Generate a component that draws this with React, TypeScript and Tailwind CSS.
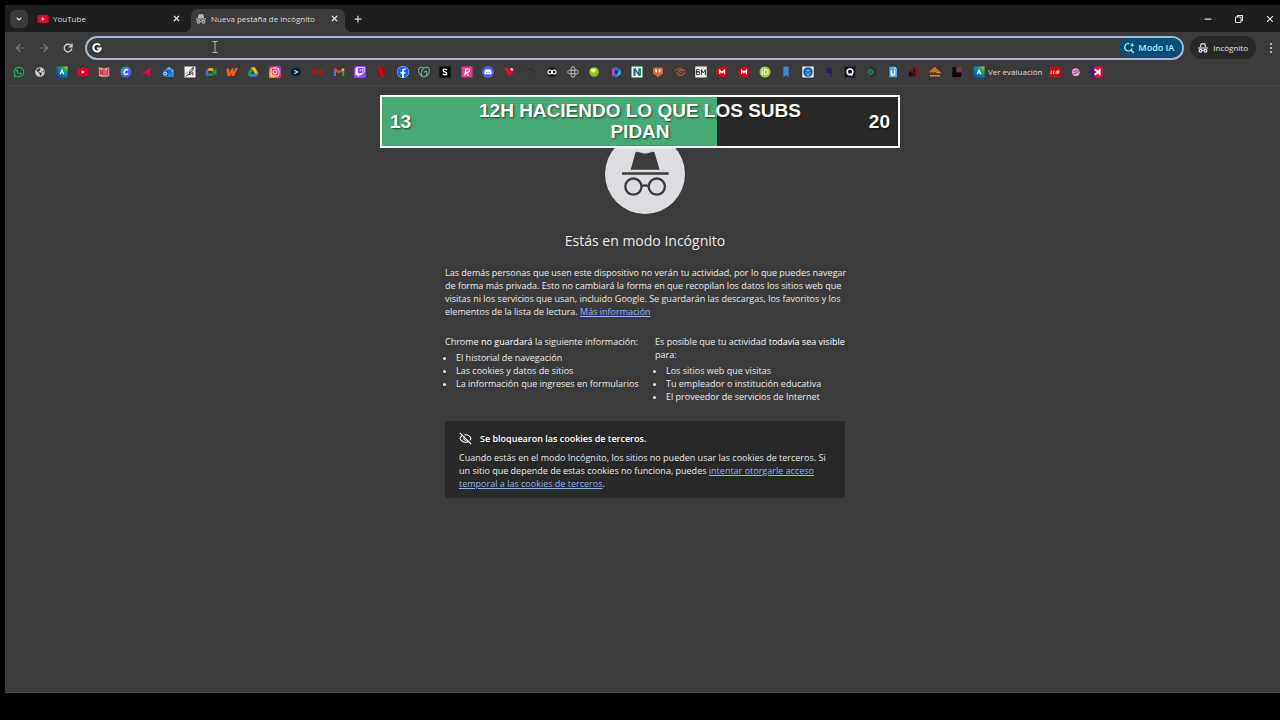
import type { ReactNode } from "react";
import {
  FaDiscord,
  FaFacebook,
  FaGlobeAmericas,
  FaInstagram,
  FaTwitch,
  FaWhatsapp,
} from "react-icons/fa";
import { SiGodaddy } from "react-icons/si";
import { ArrowLeft, ArrowRight, ChevronDown, EyeOff, Minus, Plus, X } from "lucide-react";

type BoxProps = { children: ReactNode };

const Box = ({ children }: BoxProps) => (
  <svg viewBox="0 0 12 12" className="size-3" aria-hidden="true">
    {children}
  </svg>
);

const YouTubeIcon = () => (
  <Box>
    <rect x="0.3" y="2" width="11.4" height="8" rx="2" fill="#e4002b" />
    <path d="M4.8 4.3 7.8 6 4.8 7.7z" fill="#fff" />
  </Box>
);

const AlexandriaIcon = () => (
  <Box>
    <defs>
      <linearGradient id="alx" x1="0" y1="1" x2="1" y2="0">
        <stop offset="0" stopColor="#0b3fa8" />
        <stop offset="0.5" stopColor="#0a83b4" />
        <stop offset="0.75" stopColor="#1fae5a" />
        <stop offset="1" stopColor="#f2e22c" />
      </linearGradient>
    </defs>
    <rect x="0.5" y="0.5" width="11" height="11" fill="url(#alx)" />
    <path d="M4.2 8.2 6 4.2 7.8 8.2" fill="none" stroke="#fff" strokeWidth="1.3" />
  </Box>
);

const MegaIcon = () => (
  <Box>
    <circle cx="6" cy="6" r="5.6" fill="#d9001b" />
    <path d="M3.6 8V4.3L6 6.6l2.4-2.3V8" fill="none" stroke="#fff" strokeWidth="1.4" />
  </Box>
);

const IncognitoIcon = ({ filled = false }: { filled?: boolean }) => (
  <svg viewBox="0 0 12 12" className="size-3 shrink-0" fill="none" stroke="currentColor" aria-hidden="true">
    <path d="M3.4 5 4.2 1.8h3.6L8.6 5" strokeWidth="1.2" fill={filled ? "currentColor" : "none"} />
    <path d="M1 6h10" strokeWidth="1.2" />
    <circle cx="3.5" cy="8.8" r="1.4" strokeWidth="1.2" />
    <circle cx="8.5" cy="8.8" r="1.4" strokeWidth="1.2" />
    <path d="M4.8 8.4Q6 7.9 7.2 8.4" strokeWidth="1" />
  </svg>
);

const bookmarks: { name: string; icon: ReactNode }[] = [
  { name: "WhatsApp", icon: <FaWhatsapp className="size-3 text-[#25c35f]" /> },
  { name: "Web", icon: <FaGlobeAmericas className="size-2.5 text-[#c9c9c9]" /> },
  { name: "Plataforma", icon: <AlexandriaIcon /> },
  { name: "YouTube", icon: <YouTubeIcon /> },
  {
    name: "Lecturas",
    icon: (
      <Box>
        <path d="M0.8 1.2 5.6 2.2 6 3 6.6 2.2 11.2 1.2V10L6 11.2 0.8 10z" fill="#e8a3a8" />
        <path d="M2.2 9V3.4L4.4 9V3.4M6 2.6v8.4M8 4v5M9.8 2v6.6Q8 10 7.8 8" fill="none" stroke="#bd2637" strokeWidth="1" />
      </Box>
    ),
  },
  {
    name: "Canva",
    icon: (
      <Box>
        <defs>
          <linearGradient id="canva" x1="0" y1="0" x2="1" y2="1">
            <stop offset="0" stopColor="#12b9d0" />
            <stop offset="1" stopColor="#7a35e2" />
          </linearGradient>
        </defs>
        <circle cx="6" cy="6" r="5.6" fill="url(#canva)" />
        <path d="M8 4.2C7.5 2.7 4 3.6 4 6.6 4 9.2 6.8 9 8 7.4" fill="none" stroke="#fff" strokeWidth="1.3" />
      </Box>
    ),
  },
  { name: "Triángulo", icon: <Box><path d="M9.4 1.6v9H7.6L6.8 8.6 1 7.4z" fill="#d80b46" /></Box> },
  {
    name: "Outlook",
    icon: (
      <Box>
        <path d="M2.2 4.4 7 0.8l4.6 3.4v6.6H2.2z" fill="#5fb5f2" />
        <path d="M4 3.4h5.6v4L6.8 9 4 7.4z" fill="#1c6fca" />
        <path d="M11.6 5v6H3z" fill="#2288e0" />
        <rect x="0.2" y="4.6" width="6" height="6" rx="0.8" fill="#0b5cb5" />
        <circle cx="3.2" cy="7.6" r="1.5" fill="none" stroke="#fff" />
      </Box>
    ),
  },
  {
    name: "Notas",
    icon: (
      <Box>
        <rect x="0.5" y="0.5" width="11" height="11" fill="#f3f3f3" />
        <path d="M1.6 10.4Q7 8 9.4 3 10.4 0.6 8 2.2 5.4 4.2 5.2 8.4 6.4 9 7.8 7.4 10 5 8.6 9.4" fill="none" stroke="#222" strokeWidth="0.9" />
        <path d="M1.4 7.4 4 6.2" stroke="#cf7d8a" strokeWidth="0.8" />
      </Box>
    ),
  },
  {
    name: "Meet",
    icon: (
      <Box>
        <path d="M0.6 5 3.2 2.2V5z" fill="#e04336" />
        <path d="M3.2 2.2h5.2v2.6H3.2z" fill="#f5b50a" />
        <path d="M0.6 5h2.6v4.8H1.4q-0.8 0-0.8-0.8z" fill="#2477ee" />
        <path d="M3.2 7.4h5.2v2.4H3.2zM6.8 6 11.4 2.6v6.8z" fill="#18a24b" />
      </Box>
    ),
  },
  {
    name: "Wattpad",
    icon: <Box><path d="M0.4 2.8 3 2.2l0.6 4.4L6 2.2h1.6L7.8 6.2 9.8 1.6 11.8 2 8.4 9.8 5.8 10 5.4 7.4 4 10.2 1.4 10z" fill="#f26419" /></Box>,
  },
  {
    name: "Drive",
    icon: (
      <Box>
        <path d="M4.2 1.2 0.4 7.8l1.8 3L6 4.2z" fill="#12a15a" />
        <path d="M4.2 1.2h3.6l3.8 6.6H8z" fill="#fbbc15" />
        <path d="M4 7.8h7.6l-1.8 3H2.2z" fill="#3c7df0" />
      </Box>
    ),
  },
  {
    name: "Instagram",
    icon: (
      <span className="flex size-3 items-center justify-center rounded-[2px] bg-linear-to-tr from-[#fdb52c] via-[#f02a5c] to-[#a82bd8]">
        <FaInstagram className="size-2.5 text-white" />
      </span>
    ),
  },
  {
    name: "Consola",
    icon: (
      <Box>
        <circle cx="6" cy="6" r="4.8" fill="#0b2038" />
        <path d="M4.2 4.2 7.6 6 4.2 7.8" fill="none" stroke="#b9dbef" strokeWidth="1.1" />
      </Box>
    ),
  },
  {
    name: "Noticias",
    icon: <Box><path d="M0.4 8V4.4L2.2 6.6 4 4.4V8M5 4.8h2.4M5 6.2h2M5 7.6h2.6M5.4 4.4V8M8.6 7.6V4.8h2.8v2.8H8.6" fill="none" stroke="#b80f1b" strokeWidth="1.4" /></Box>,
  },
  {
    name: "Gmail",
    icon: (
      <Box>
        <path d="M0.8 3v7h2.2V5.2z" fill="#3f80ee" />
        <path d="M11.2 3v7H9V5.2z" fill="#25a353" />
        <path d="M0.8 3.2Q1.2 1.6 3 2.6L6 5l3-2.4v3L6 7.8 0.8 4.2z" fill="#e6402f" />
        <path d="M9 2.6q1.8-1 2.2 0.6v1L9 5.8z" fill="#f9bb19" />
      </Box>
    ),
  },
  {
    name: "Twitch",
    icon: (
      <span className="flex size-3 items-center justify-center rounded-[2px] bg-[#9146ff]">
        <FaTwitch className="size-2.5 text-white" />
      </span>
    ),
  },
  {
    name: "Netflix",
    icon: (
      <Box>
        <path d="M2.6 0.8h2.6v10.4H2.6zM6.8 0.8h2.6v10.4H6.8z" fill="#9f0711" />
        <path d="M2.6 0.8h2.6L9.4 11.2H6.8z" fill="#c90a16" />
      </Box>
    ),
  },
  { name: "Facebook", icon: <FaFacebook className="size-3 rounded-full bg-white text-[#0866ff]" /> },
  { name: "GoDaddy", icon: <SiGodaddy className="size-3 text-[#67b89b]" /> },
  {
    name: "Scribd",
    icon: (
      <Box>
        <rect x="0.5" y="0.5" width="11" height="11" fill="#000" />
        <path d="M8.2 3.8Q4.2 2.2 4.2 4.3 4.2 5.6 6 6 8 6.4 7.8 7.8 6.8 9.4 3.8 8.2" fill="none" stroke="#fff" strokeWidth="1.4" />
      </Box>
    ),
  },
  {
    name: "Roster",
    icon: (
      <Box>
        <rect x="0.5" y="0.5" width="11" height="11" fill="#e83f93" />
        <path d="M3.8 9.6 4.8 3H7q2 0 1.4 2Q8 6.4 5 6.4L7.6 9.6" fill="none" stroke="#fff" strokeWidth="1.2" />
      </Box>
    ),
  },
  {
    name: "Discord",
    icon: (
      <span className="flex size-3 items-center justify-center rounded-full bg-[#5560e8]">
        <FaDiscord className="size-2 text-white" />
      </span>
    ),
  },
  {
    name: "Ofertas",
    icon: (
      <Box>
        <path d="M0.6 3 4 1.4 6.4 3.4 9 3.6 10.4 6.2 6.4 10.6z" fill="#d6152c" />
        <path d="M7 2.6 9.2 2 10.6 4.6 8 4.6z" fill="#f5dede" />
      </Box>
    ),
  },
  { name: "Archivo", icon: <Box><path d="M1.6 4.2Q6 1.8 8 4.4L10 7" fill="none" stroke="#2c2c2c" strokeWidth="1.3" /></Box> },
  {
    name: "Infinito",
    icon: (
      <Box>
        <circle cx="6" cy="6" r="5.2" fill="#222" />
        <circle cx="3.8" cy="6" r="1.9" fill="none" stroke="#eee" strokeWidth="1.2" />
        <circle cx="8.2" cy="6" r="1.9" fill="none" stroke="#eee" strokeWidth="1.2" />
      </Box>
    ),
  },
  {
    name: "Trébol",
    icon: (
      <Box>
        <g fill="none" stroke="#bdbdbd" strokeWidth="1">
          <rect x="4.2" y="0.8" width="3.6" height="10.4" rx="1.8" />
          <rect x="0.8" y="4.2" width="10.4" height="3.6" rx="1.8" />
        </g>
      </Box>
    ),
  },
  {
    name: "Esfera",
    icon: (
      <Box>
        <circle cx="6" cy="6" r="4.8" fill="#9acb20" />
        <path d="M3.4 3.2 6.6 2.4 8 4.8 5.6 6.4 3.4 5.4z" fill="#f2fbe0" />
        <path d="M2 8Q6 11 10 7" fill="none" stroke="#6f9c18" strokeWidth="0.8" />
      </Box>
    ),
  },
  {
    name: "Clipchamp",
    icon: (
      <Box>
        <path d="M2 2.2 6 0.6l5 3.6-0.4 4.4L6 11.4 2 10z" fill="#3e62cf" />
        <path d="M2 2.2v7.8L5.4 8V3.8z" fill="#9462c8" />
        <path d="M6 11.4 11 8V4.6L8 6z" fill="#43a4d6" />
        <circle cx="6.2" cy="6" r="1.7" fill="#262e55" />
      </Box>
    ),
  },
  {
    name: "Norma",
    icon: (
      <Box>
        <rect x="0.5" y="0.5" width="11" height="11" fill="#f2f8f7" />
        <path d="M2.4 9.8V2.2h2L7.4 7V2.2h2.2v7.6h-2L4.6 5v4.8z" fill="#13687f" />
        <path d="M8.6 2.2h1.4v7.6H8.6z" fill="#20a06c" />
      </Box>
    ),
  },
  {
    name: "Citas",
    icon: (
      <Box>
        <path d="M2.2 1.4h7.6Q11 1.4 11 3v4Q11 8.4 9.6 8.6L6 11.2 2.6 8.6Q1 8.4 1 7V3Q1 1.4 2.2 1.4z" fill="#d4673b" />
        <path d="M3.2 3.6h2v2L4 7V5.4h-0.8zM6.6 3.6h2v2L7.4 7V5.4h-0.8z" fill="#fff" />
      </Box>
    ),
  },
  {
    name: "Ojo",
    icon: <Box><path d="M0.8 4.6Q6 0.2 11 4.8 6.6 3.4 4.6 5 6 7.4 8 5.8M11.2 6.4Q6 12.8 2.4 6.2" fill="none" stroke="#b4552e" strokeWidth="1.1" /></Box>,
  },
  {
    name: "BM",
    icon: (
      <Box>
        <rect x="0.3" y="0.5" width="11.4" height="11" fill="#f4f4f2" />
        <path d="M1.6 3.4v5.2h1.6q1.6 0 1.6-1.4T3.2 5.8H1.6h1.2q1.6 0 1.6-1.2T2.8 3.4zM6.4 9V3.6L8.4 7l2-3.4V9" fill="none" stroke="#25343b" strokeWidth="1" />
      </Box>
    ),
  },
  { name: "MEGA", icon: <MegaIcon /> },
  { name: "MEGA archivos", icon: <MegaIcon /> },
  {
    name: "iD",
    icon: (
      <Box>
        <circle cx="6" cy="6" r="5.5" fill="#a9d03b" />
        <path d="M3.6 4.8v4M3.6 2.8v1M5.6 3.4v5h1.2q2.2-0.2 2.2-2.5T6.8 3.4z" fill="none" stroke="#fff" strokeWidth="1" />
      </Box>
    ),
  },
  { name: "Marcador", icon: <Box><path d="M3.4 0.8h5.2v10.4L6 9.2 3.4 11.2z" fill="#4b83e2" /></Box> },
  {
    name: "Instituto",
    icon: (
      <Box>
        <rect x="0.3" y="0.5" width="11.4" height="11" fill="#eef3f8" />
        <circle cx="6" cy="6" r="4.8" fill="#155aa5" />
        <path d="M6 2.6v6.8M3.6 4.4h4.8M3.2 6.2Q4 9 6 9.2 8 9 8.8 6.2" fill="none" stroke="#a6c8e8" strokeWidth="0.8" />
      </Box>
    ),
  },
  { name: "Párrafo", icon: <Box><path d="M8.6 2v8.4H7.4V7H4.4Q2.6 6 2.8 4 3 2 5 2z" fill="#2b1a63" /></Box> },
  {
    name: "Q",
    icon: (
      <Box>
        <rect x="0.5" y="0.5" width="11" height="11" fill="#1e1428" />
        <circle cx="6" cy="5.8" r="2.9" fill="none" stroke="#fff" strokeWidth="1.5" />
        <path d="M6.4 7.4 8.4 9.6" stroke="#fff" strokeWidth="1.3" />
      </Box>
    ),
  },
  {
    name: "Diapasón",
    icon: (
      <Box>
        <circle cx="4.6" cy="6" r="2" fill="none" stroke="#18855c" strokeWidth="1.3" />
        <path d="M4.4 1.8Q9.4 1.2 9.4 6T4.4 10.2" fill="none" stroke="#1c2a26" strokeWidth="1.5" />
      </Box>
    ),
  },
  {
    name: "Documento U",
    icon: (
      <Box>
        <path d="M2.4 0.8h5.2L10 3v8.2H2.4z" fill="#56aee8" />
        <path d="M7.6 0.8 10 3H7.6z" fill="#d8effc" />
        <path d="M4.4 4.6v3q0 1.6 1.6 1.6T7.6 7.6v-3" fill="none" stroke="#fff" strokeWidth="1.2" />
      </Box>
    ),
  },
  {
    name: "Bloques",
    icon: (
      <Box>
        <path d="M0.8 5.6h4v4.8h-4zM5.6 1.4h1.6v9H5.6z" fill="#230d10" />
        <path d="M2 2h3v3H2zM7.4 1.4h3v9h-3z" fill="#84121f" />
      </Box>
    ),
  },
  {
    name: "Techo",
    icon: <Box><path d="M0.8 6.6 5.8 2 10.8 6.6H8.2L5.8 4.4 3.6 6.6M1 9.8h10" fill="none" stroke="#ee8720" strokeWidth="1.4" /></Box>,
  },
  {
    name: "Letra L",
    icon: (
      <Box>
        <path d="M1.2 1.2h4v5.2h5v4.6h-9z" fill="#0d0a0b" />
        <path d="M6 1.4h4.8L10 5.6H6z" fill="#a32a3b" />
      </Box>
    ),
  },
];

const rowLink = "flex size-3 shrink-0 items-center justify-center";

const BookmarksBar = () => (
  <nav aria-label="Favoritos" className="flex h-[26px] items-center border-b border-[#484848] pb-px pl-2 text-[8px] text-[#dcdcdc]">
    <div className="flex w-[950px] items-center justify-between">
      {bookmarks.map((b) => (
        <a key={b.name} href="#" aria-label={b.name} className={rowLink}>
          {b.icon}
        </a>
      ))}
    </div>
    <a href="#" className="ml-[10px] flex items-center gap-[3px] whitespace-nowrap">
      <AlexandriaIcon />
      Ver evaluación
    </a>
    <div className="ml-[7px] flex items-center gap-[9px]">
      <a href="#" aria-label="Lego" className={rowLink}>
        <Box>
          <rect x="0.4" y="0.8" width="11.2" height="10.4" fill="#c90d17" />
          <path d="M2.4 4.6 1.8 7.4h1.4M5 4.6 4.4 7.4h1.2M7.6 4.6 6.8 7.4h1M10 4.6 9.4 7.4h-1L9 4.6z" fill="none" stroke="#fbe3d0" strokeWidth="0.8" />
        </Box>
      </a>
      <a href="#" aria-label="Planeta" className={rowLink}>
        <Box>
          <circle cx="5.8" cy="6.2" r="3.9" fill="#e0a0ce" />
          <path d="M1.4 8.6Q7.4 7.6 10.8 3.2M3.2 5.4Q6 5.6 7.8 3.6" fill="none" stroke="#7b3b77" strokeWidth="0.9" />
        </Box>
      </a>
      <a href="#" aria-label="K" className={rowLink}>
        <Box>
          <rect x="0.5" y="0.5" width="11" height="11" fill="#dd1455" />
          <path d="M0.5 0.5h2.8v11H0.5z" fill="#42127c" />
          <path d="M8.6 2.8v6.4M3.4 3.2 7.6 6 3.4 8.8" fill="none" stroke="#fff" strokeWidth="1.8" />
        </Box>
      </a>
    </div>
  </nav>
);

const TabStrip = () => (
  <div className="flex h-[27px] items-center bg-[#1f1f1f] pl-[5px] text-[8px] text-[#dedede]">
    <button aria-label="Buscar pestañas" className="flex size-[18px] items-center justify-center rounded-[6px] bg-[#3b3b3b]">
      <ChevronDown className="size-2" strokeWidth={3.5} />
    </button>
    <div className="ml-[3px] flex w-[154px] items-center gap-1 pr-1 pl-1.5">
      <YouTubeIcon />
      <button className="flex-1 text-left">YouTube</button>
      <button aria-label="Cerrar YouTube">
        <X className="size-[9px]" strokeWidth={3.5} />
      </button>
    </div>
    <div className="relative ml-1.5 flex h-[23px] w-[154px] items-center gap-1 self-end rounded-t-[7px] bg-[#3b3b3b] pr-1.5 pb-1 pl-1">
      <span className="absolute bottom-0 -left-1.5 size-1.5 bg-[radial-gradient(circle_at_0_0,transparent_6px,#3b3b3b_6px)]" />
      <span className="absolute -right-1.5 bottom-0 size-1.5 bg-[radial-gradient(circle_at_100%_0,transparent_6px,#3b3b3b_6px)]" />
      <span className="text-[#b5b5b5]">
        <IncognitoIcon filled />
      </span>
      <button className="flex-1 text-left whitespace-nowrap">Nueva pestaña de incógnito</button>
      <button aria-label="Cerrar pestaña">
        <X className="size-[9px]" strokeWidth={3.5} />
      </button>
    </div>
    <button aria-label="Nueva pestaña" className="ml-2">
      <Plus className="size-2.5" strokeWidth={3} />
    </button>
    <div className="ml-auto flex items-center gap-[21px] pr-[5px]">
      <button aria-label="Minimizar">
        <Minus className="size-2.5" strokeWidth={3} />
      </button>
      <button aria-label="Restaurar">
        <svg viewBox="0 0 10 10" className="size-2.5" fill="none" stroke="currentColor" strokeWidth="1.1">
          <rect x="1.5" y="3" width="5.5" height="5.5" rx="0.8" />
          <path d="M3.5 3V1.5h5v5H7" />
        </svg>
      </button>
      <button aria-label="Cerrar">
        <X className="size-2.5" strokeWidth={2.6} />
      </button>
    </div>
  </div>
);

const Toolbar = () => (
  <div className="flex h-[28px] items-center pt-[3px] pr-[3px] text-[8px] text-[#e3e3e3]">
    <div className="ml-[9px] flex items-center gap-3 text-[#7d7d7d]">
      <button aria-label="Atrás">
        <ArrowLeft className="size-3" strokeWidth={2.4} />
      </button>
      <button aria-label="Adelante">
        <ArrowRight className="size-3" strokeWidth={2.4} />
      </button>
      <button aria-label="Volver a cargar" className="text-[#d5d5d5]">
        <svg viewBox="0 0 12 12" className="size-3" fill="none" stroke="currentColor" strokeWidth="1.3">
          <path d="M9.8 6.6A3.8 3.8 0 1 1 8.8 3.4L9.8 4.4" />
          <path d="M10 1.6v3.2H6.8" />
        </svg>
      </button>
    </div>
    <div className="relative ml-[11px] flex h-6 flex-1 items-center rounded-full border-2 border-[#a3b8dc] pl-1">
      <svg viewBox="0 0 12 12" className="size-3" fill="none" stroke="#fff" strokeWidth="1.9" aria-hidden="true">
        <path d="M9 3.2A3.8 3.8 0 1 0 9.8 6.5H6.2" />
      </svg>
      <input aria-label="Buscar en Google o ingresar una URL" className="ml-2 h-4 flex-1 bg-transparent outline-none" />
      <svg viewBox="0 0 8 14" className="absolute top-0.5 left-[124px] h-3.5 w-2" fill="none" stroke="#b9b9b9" aria-hidden="true">
        <path d="M1.5 1.5h5M1.5 12.5h5M4 1.5v11" />
      </svg>
      <button className="flex h-[19px] items-center gap-[3px] rounded-full bg-[#064f78] pr-2 pl-1 text-[9px] font-semibold text-[#c3e8fc]">
        <svg viewBox="0 0 12 12" className="size-3" fill="none" stroke="currentColor" strokeWidth="1.2" aria-hidden="true">
          <path d="M6.2 1.6A3.7 3.7 0 1 0 9 6.4M7.8 8 11 11" />
          <path d="M9.2 0.6 9.9 2.4 11.7 3.1 9.9 3.8 9.2 5.6 8.5 3.8 6.7 3.1 8.5 2.4z" fill="currentColor" stroke="none" />
        </svg>
        Modo IA
      </button>
    </div>
    <button className="ml-1.5 flex h-[23px] items-center gap-1 rounded-full bg-[#282828] pr-2 pl-[7px]">
      <IncognitoIcon />
      Incógnito
    </button>
    <button aria-label="Menú" className="ml-[9px]">
      <svg viewBox="0 0 12 12" className="size-3" fill="currentColor">
        <circle cx="6" cy="2" r="1" />
        <circle cx="6" cy="6" r="1" />
        <circle cx="6" cy="10" r="1" />
      </svg>
    </button>
  </div>
);

const GoalBar = () => {
  const current = 13;
  const goal = 20;
  return (
    <div className="absolute top-[95px] left-1/2 w-[520px] -translate-x-1/2 border-2 border-white bg-[#292929] font-['Liberation_Sans',Arial,sans-serif] text-[19px] leading-[21px] font-bold text-white">
      <div className="absolute inset-y-0 left-0 bg-[#47aa74]" style={{ width: `${(current / goal) * 100}%` }} />
      <div className="relative flex items-center justify-between px-2 pt-[3px] pb-1 [text-shadow:1px_1px_2px_#0009]">
        <span>{current}</span>
        <p className="w-[340px] text-center">12H HACIENDO LO QUE LOS SUBS PIDAN</p>
        <span>{goal}</span>
      </div>
    </div>
  );
};

const IncognitoPage = () => (
  <main className="flex flex-1 flex-col items-center border-b border-[#505050] pt-12 pl-[5px] text-[9px] leading-[13px] text-[#e8e8e8]">
    <svg viewBox="0 0 80 80" className="size-20" aria-hidden="true">
      <circle cx="40" cy="40" r="40" fill="#dcdde1" />
      <path d="M30.5 20.4Q31 19.6 32.4 19.8L37.6 21.2Q40 21.8 42.4 21.2L47.6 19.8Q49 19.6 49.5 20.4L54.6 37.7H25.7z" fill="#3b3b3b" transform="translate(0 -2)" />
      <path d="M17 38.2h46.6v2.6H17z" fill="#3b3b3b" />
      <g fill="none" stroke="#3b3b3b" strokeWidth="2.3">
        <circle cx="28.4" cy="52.6" r="8.1" />
        <circle cx="51.8" cy="52.6" r="8.1" />
        <path d="M36.2 52.4Q40 50.4 44 52.4" />
      </g>
    </svg>
    <h1 className="mt-4 text-sm leading-[22px]">Estás en modo Incógnito</h1>
    <div className="w-full max-w-[400px]">
      <p className="mt-[14px] whitespace-nowrap">
        Las demás personas que usen este dispositivo no verán tu actividad, por lo que puedes navegar
        <br />
        de forma más privada. Esto no cambiará la forma en que recopilan los datos los sitios web que
        <br />
        visitas ni los servicios que usan, incluido Google. Se guardarán las descargas, los favoritos y los
        <br />
        elementos de la lista de lectura.{" "}
        <a href="#" className="text-[#8ab4f8] underline">
          Más información
        </a>
      </p>
      <div className="mt-[17px] grid grid-cols-2 gap-5">
        <div className="whitespace-nowrap">
          <p>
            Chrome <strong className="font-medium text-white">no guardará</strong> la siguiente información:
          </p>
          <ul className="mt-[3px] list-disc pl-[11px]">
            <li>El historial de navegación</li>
            <li>Las cookies y datos de sitios</li>
            <li>La información que ingreses en formularios</li>
          </ul>
        </div>
        <div>
          <p>
            Es posible que tu actividad <strong className="font-medium text-white">todavía sea visible</strong> para:
          </p>
          <ul className="mt-[3px] list-disc pl-[11px]">
            <li>Los sitios web que visitas</li>
            <li>Tu empleador o institución educativa</li>
            <li>El proveedor de servicios de Internet</li>
          </ul>
        </div>
      </div>
      <section className="mt-[18px] rounded-[2px] bg-[#282828] px-[14px] pt-[11px] pb-2">
        <h2 className="flex items-center gap-2 font-semibold text-white">
          <EyeOff className="size-[13px]" />
          Se bloquearon las cookies de terceros.
        </h2>
        <p className="mt-[6px]">
          Cuando estás en el modo Incógnito, los sitios no pueden usar las cookies de terceros. Si un
          sitio que depende de estas cookies no funciona, puedes{" "}
          <a href="#" className="text-[#8ab4f8] underline">
            intentar otorgarle acceso temporal a las cookies de terceros
          </a>
          .
        </p>
      </section>
    </div>
  </main>
);

export default function App() {
  return (
    <div className="relative flex min-h-screen flex-col bg-black pt-[5px] pb-[27px] pl-[5px] font-['Open_Sans','Noto_Sans',sans-serif]">
      <div className="flex flex-1 flex-col bg-[#3b3b3b]">
        <TabStrip />
        <Toolbar />
        <BookmarksBar />
        <IncognitoPage />
      </div>
      <GoalBar />
    </div>
  );
}
